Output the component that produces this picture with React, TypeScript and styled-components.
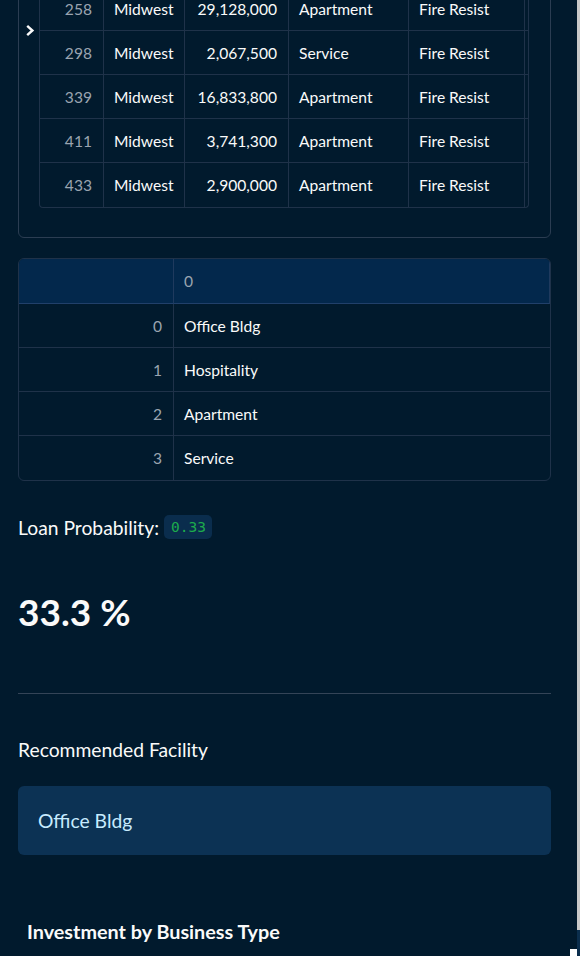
import React from "react";
import styled, { createGlobalStyle } from "styled-components";

const Global = createGlobalStyle`
  html, body { margin: 0; padding: 0; background: #011a2d; overflow: hidden; }
  body { font-family: Lato, "Noto Sans", sans-serif; color: #fafafa; }
`;

const Shell = styled.div`
  display: flex;
  width: 580px;
  height: 956px;
  overflow: hidden;
  background: #011a2d;
`;

const Main = styled.main`
  flex: 1;
  min-width: 0;
  padding: 0 26px 0 18px;
  display: flex;
  flex-direction: column;
  position: relative;
`;

const ScrollTrack = styled.div`
  width: 3px;
  flex-shrink: 0;
  display: flex;
  flex-direction: column;
  background: #c9c9c9;
`;

const ScrollFoot = styled.div`
  margin-top: auto;
  height: 26px;
  background: #0b2e4d;
`;

const Corner = styled.div`
  position: absolute;
  right: 0;
  bottom: 0;
  width: 7px;
  height: 7px;
  background: #ffffff;
`;

const Expander = styled.section`
  margin-top: -60px;
  border: 1px solid #2b3d52;
  border-radius: 6px;
  padding: 46px 21px 29px 20px;
  position: relative;
`;

const Chevron = styled.svg`
  position: absolute;
  left: 6px;
  top: 83px;
  width: 10px;
  height: 13px;
`;

const Grid = styled.div<{ $cols: string }>`
  display: grid;
  grid-template-columns: ${(p) => p.$cols};
  border: 1px solid #1f3249;
  border-top: none;
  border-radius: 0 0 4px 4px;
  overflow: hidden;
`;

const Cell = styled.div<{ $num?: boolean; $idx?: boolean; $h: number; $last?: boolean }>`
  height: ${(p) => p.$h}px;
  box-sizing: border-box;
  display: flex;
  align-items: center;
  justify-content: ${(p) => (p.$num ? "flex-end" : "flex-start")};
  padding: 0 11px 0 10px;
  font-size: 15.6px;
  color: ${(p) => (p.$idx ? "#9aa4b0" : "#fafafa")};
  border-right: 1px solid #1f3249;
  border-bottom: ${(p) => (p.$last ? "none" : "1px solid #1f3249")};
  white-space: nowrap;
  overflow: hidden;
`;

const Table2 = styled.div`
  margin-top: 20px;
  border: 1px solid #1f3249;
  border-radius: 6px;
  display: grid;
  grid-template-columns: 155px 1fr;
  overflow: hidden;
`;

const HeadCell = styled.div`
  height: 45px;
  box-sizing: border-box;
  background: #03284c;
  border-bottom: 1px solid #21406a;
  border-right: 1px solid #1f3a5e;
  display: flex;
  align-items: center;
  padding: 0 10px;
  font-size: 15.6px;
  color: #9aa4b0;
  &:last-child { border-right: none; }
`;

const Row2Cell = styled.div<{ $idx?: boolean; $last?: boolean }>`
  height: 44px;
  box-sizing: border-box;
  display: flex;
  align-items: center;
  justify-content: ${(p) => (p.$idx ? "flex-end" : "flex-start")};
  padding: 0 11px 0 10px;
  font-size: 15.6px;
  color: ${(p) => (p.$idx ? "#9aa4b0" : "#fafafa")};
  border-right: ${(p) => (p.$idx ? "1px solid #1f3249" : "none")};
  border-bottom: ${(p) => (p.$last ? "none" : "1px solid #1f3249")};
`;

const ProbLine = styled.div`
  margin-top: 34px;
  display: flex;
  align-items: center;
  gap: 5px;
  font-size: 19.3px;
`;

const Code = styled.code`
  font-family: "DejaVu Sans Mono", "Liberation Mono", monospace;
  font-size: 14.5px;
  color: #1dab4c;
  background: #0a2d4d;
  border-radius: 5px;
  padding: 4px 6px 4px 7px;
`;

const Big = styled.div`
  margin-top: 54px;
  font-size: 37px;
  font-weight: 700;
  line-height: 1;
`;

const Divider = styled.hr`
  margin: 63px 0 0 0;
  border: none;
  border-top: 1px solid #344457;
  width: 100%;
`;

const Label = styled.div`
  margin-top: 44px;
  font-size: 19.3px;
`;

const InfoBox = styled.div`
  margin-top: 25px;
  height: 69px;
  border-radius: 6px;
  background: #0c3254;
  color: #c7ebff;
  display: flex;
  align-items: center;
  padding: 0 20px;
  font-size: 19.3px;
`;

const ChartTitle = styled.div`
  margin-top: 64px;
  padding-left: 9px;
  font-size: 19.8px;
  font-weight: 700;
`;

const rows = [
  ["258", "Midwest", "29,128,000", "Apartment", "Fire Resist"],
  ["298", "Midwest", "2,067,500", "Service", "Fire Resist"],
  ["339", "Midwest", "16,833,800", "Apartment", "Fire Resist"],
  ["411", "Midwest", "3,741,300", "Apartment", "Fire Resist"],
  ["433", "Midwest", "2,900,000", "Apartment", "Fire Resist"],
];

const types = ["Office Bldg", "Hospitality", "Apartment", "Service"];

export default function App() {
  return (
    <>
      <Global />
      <Shell>
        <Main>
          <Expander>
            <Chevron viewBox="0 0 10 13">
              <path d="M2.2 1.8 L7.4 6.5 L2.2 11.2" fill="none" stroke="#fafafa" strokeWidth="2.4" />
            </Chevron>
            <Grid $cols="64px 81px 104px 120px 116px 3px">
              {rows.map((r, i) =>
                [...r, ""].map((c, j) => (
                  <Cell
                    key={`${i}-${j}`}
                    $h={44}
                    $idx={j === 0}
                    $num={j === 0 || j === 2}
                    $last={i === rows.length - 1}
                  >
                    {c}
                  </Cell>
                ))
              )}
            </Grid>
          </Expander>

          <Table2>
            <HeadCell />
            <HeadCell>0</HeadCell>
            {types.map((t, i) => (
              <React.Fragment key={t}>
                <Row2Cell $idx $last={i === types.length - 1}>{i}</Row2Cell>
                <Row2Cell $last={i === types.length - 1}>{t}</Row2Cell>
              </React.Fragment>
            ))}
          </Table2>

          <ProbLine>
            Loan Probability: <Code>0.33</Code>
          </ProbLine>

          <Big>33.3 %</Big>

          <Divider />

          <Label>Recommended Facility</Label>

          <InfoBox>Office Bldg</InfoBox>

          <ChartTitle>Investment by Business Type</ChartTitle>
          <Corner />
        </Main>
        <ScrollTrack>
          <ScrollFoot />
        </ScrollTrack>
      </Shell>
    </>
  );
}
